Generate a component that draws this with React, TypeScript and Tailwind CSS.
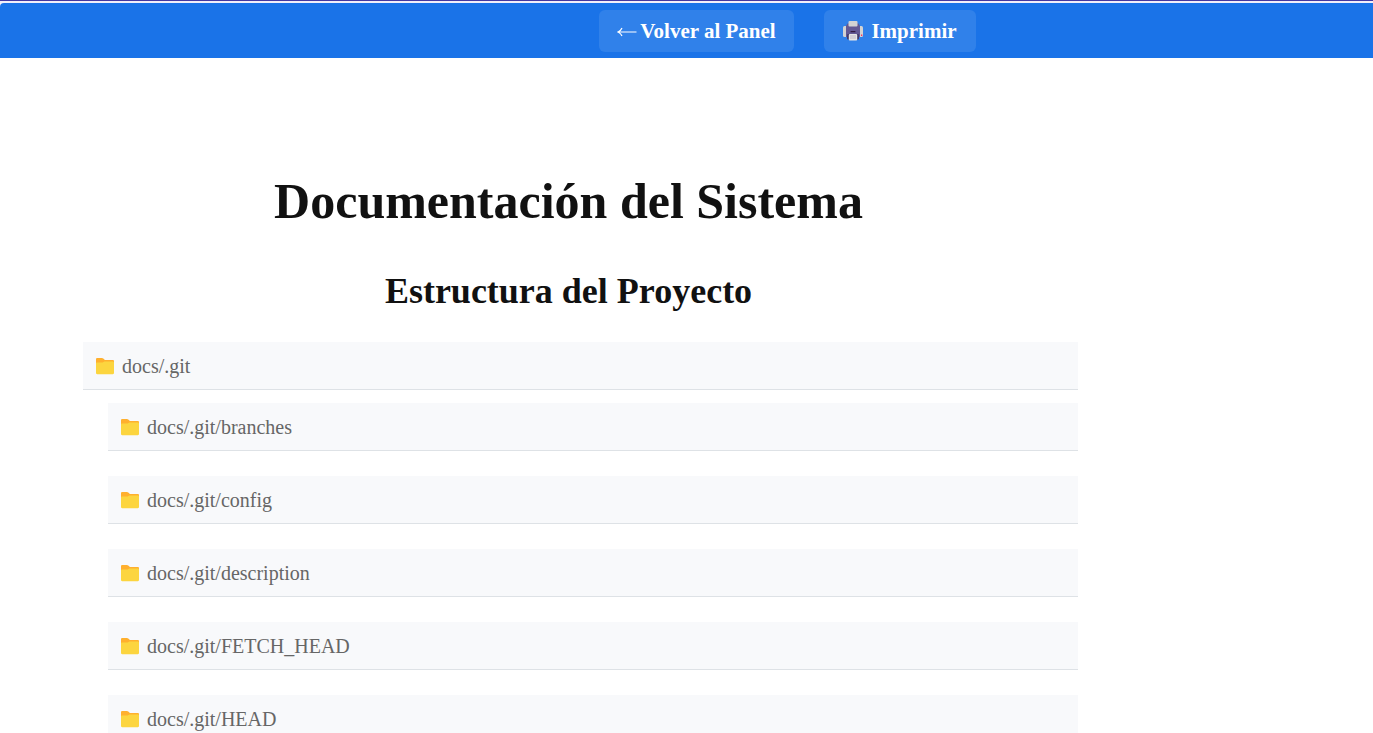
const entries = ["branches", "config", "description", "FETCH_HEAD", "HEAD"];

function FolderIcon() {
  return (
    <svg viewBox="0 0 20 18" className="h-[18px] w-5 shrink-0" aria-hidden="true">
      <path d="M1 2.2C1 1.4 1.6 1 2.3 1h4.600c.6 0 1 .2 1.4.6L9.900 3H17.800c.7 0 1.200.5 1.200 1.200V9H1z" fill="#ffb02e" />
      <path d="M1 6.800c0-.7.5-1.200 1.200-1.200h4.600c.5 0 .9-.1 1.300-.4l.8-.5c.3-.2.7-.3 1.100-.3h7.800c.7 0 1.200.5 1.200 1.200V16c0 .7-.5 1.200-1.200 1.200H2.200C1.500 17.200 1 16.700 1 16z" fill="#fcd53f" />
    </svg>
  );
}

function PrinterIcon() {
  return (
    <svg viewBox="0 0 20 20" className="h-5 w-5 shrink-0" aria-hidden="true">
      <rect x="0" y="5" width="20" height="11" rx="1.500" fill="#d3d3d3" />
      <path d="M4.500 2.500h11L17 5v11H3V5z" fill="#635994" />
      <rect x="4" y="13" width="12" height="5.500" rx="1" fill="#433b6b" />
      <rect x="5.500" y="0" width="9" height="5.500" rx="1" fill="#d3d3d3" />
      <rect x="7.500" y="10" width="5" height="1.300" rx="0.500" fill="#321b41" />
      <rect x="5.800" y="13" width="8.400" height="6.500" rx="1" fill="#e6e6e6" />
      <path d="M7 15h6M7 17h6" stroke="#b4acbc" strokeWidth="0.800" />
      <rect x="18" y="13.500" width="1.300" height="1.500" fill="#f92f60" />
    </svg>
  );
}

function Row({ path }: { path: string }) {
  return (
    <a
      href={`#${path}`}
      className="flex h-12 items-center gap-[7px] border-b border-[#dee2e6] bg-[#f8f9fb] px-3 text-xl leading-6 text-[#666666]"
    >
      <FolderIcon />
      <span>{path}</span>
    </a>
  );
}

export default function App() {
  return (
    <div className="min-h-screen bg-white font-['Liberation_Serif',serif]">
      <header className="border-t border-[#4338a0] bg-[#f3effa] pt-[2px]">
        <nav className="flex h-[55px] items-center justify-center gap-[30px] rounded-tl-sm bg-[#1a73e8] pl-[202px] text-[21px] leading-6 font-semibold text-white">
          <a href="#panel" className="flex h-[42px] w-[195px] items-center justify-center gap-[3px] rounded-md bg-[#3081ea]">
            <svg viewBox="0 0 20 12" className="h-3 w-5" fill="none" stroke="currentColor" strokeWidth="1.200" aria-hidden="true">
              <path d="M19.500 7H1M5 3Q4 5.500 1 7Q4 8.500 5 11" />
            </svg>
            Volver al Panel
          </a>
          <button type="button" className="flex h-[42px] w-[152px] items-center justify-center gap-2 rounded-md bg-[#3081ea]">
            <PrinterIcon />
            Imprimir
          </button>
        </nav>
      </header>
      <main className="pt-[113px] pr-[295px] pl-[83px]">
        <div className="pr-6 text-center font-bold text-[#111111]">
          <h1 className="text-[50px] leading-[60px]">Documentación del Sistema</h1>
          <h2 className="mt-10 text-4xl leading-10">Estructura del Proyecto</h2>
        </div>
        <section className="mt-[31px]">
          <Row path="docs/.git" />
          <ul className="mt-[13px] ml-[25px] flex flex-col gap-[25px]">
            {entries.map((entry) => (
              <li key={entry}>
                <Row path={`docs/.git/${entry}`} />
              </li>
            ))}
          </ul>
        </section>
      </main>
    </div>
  );
}
